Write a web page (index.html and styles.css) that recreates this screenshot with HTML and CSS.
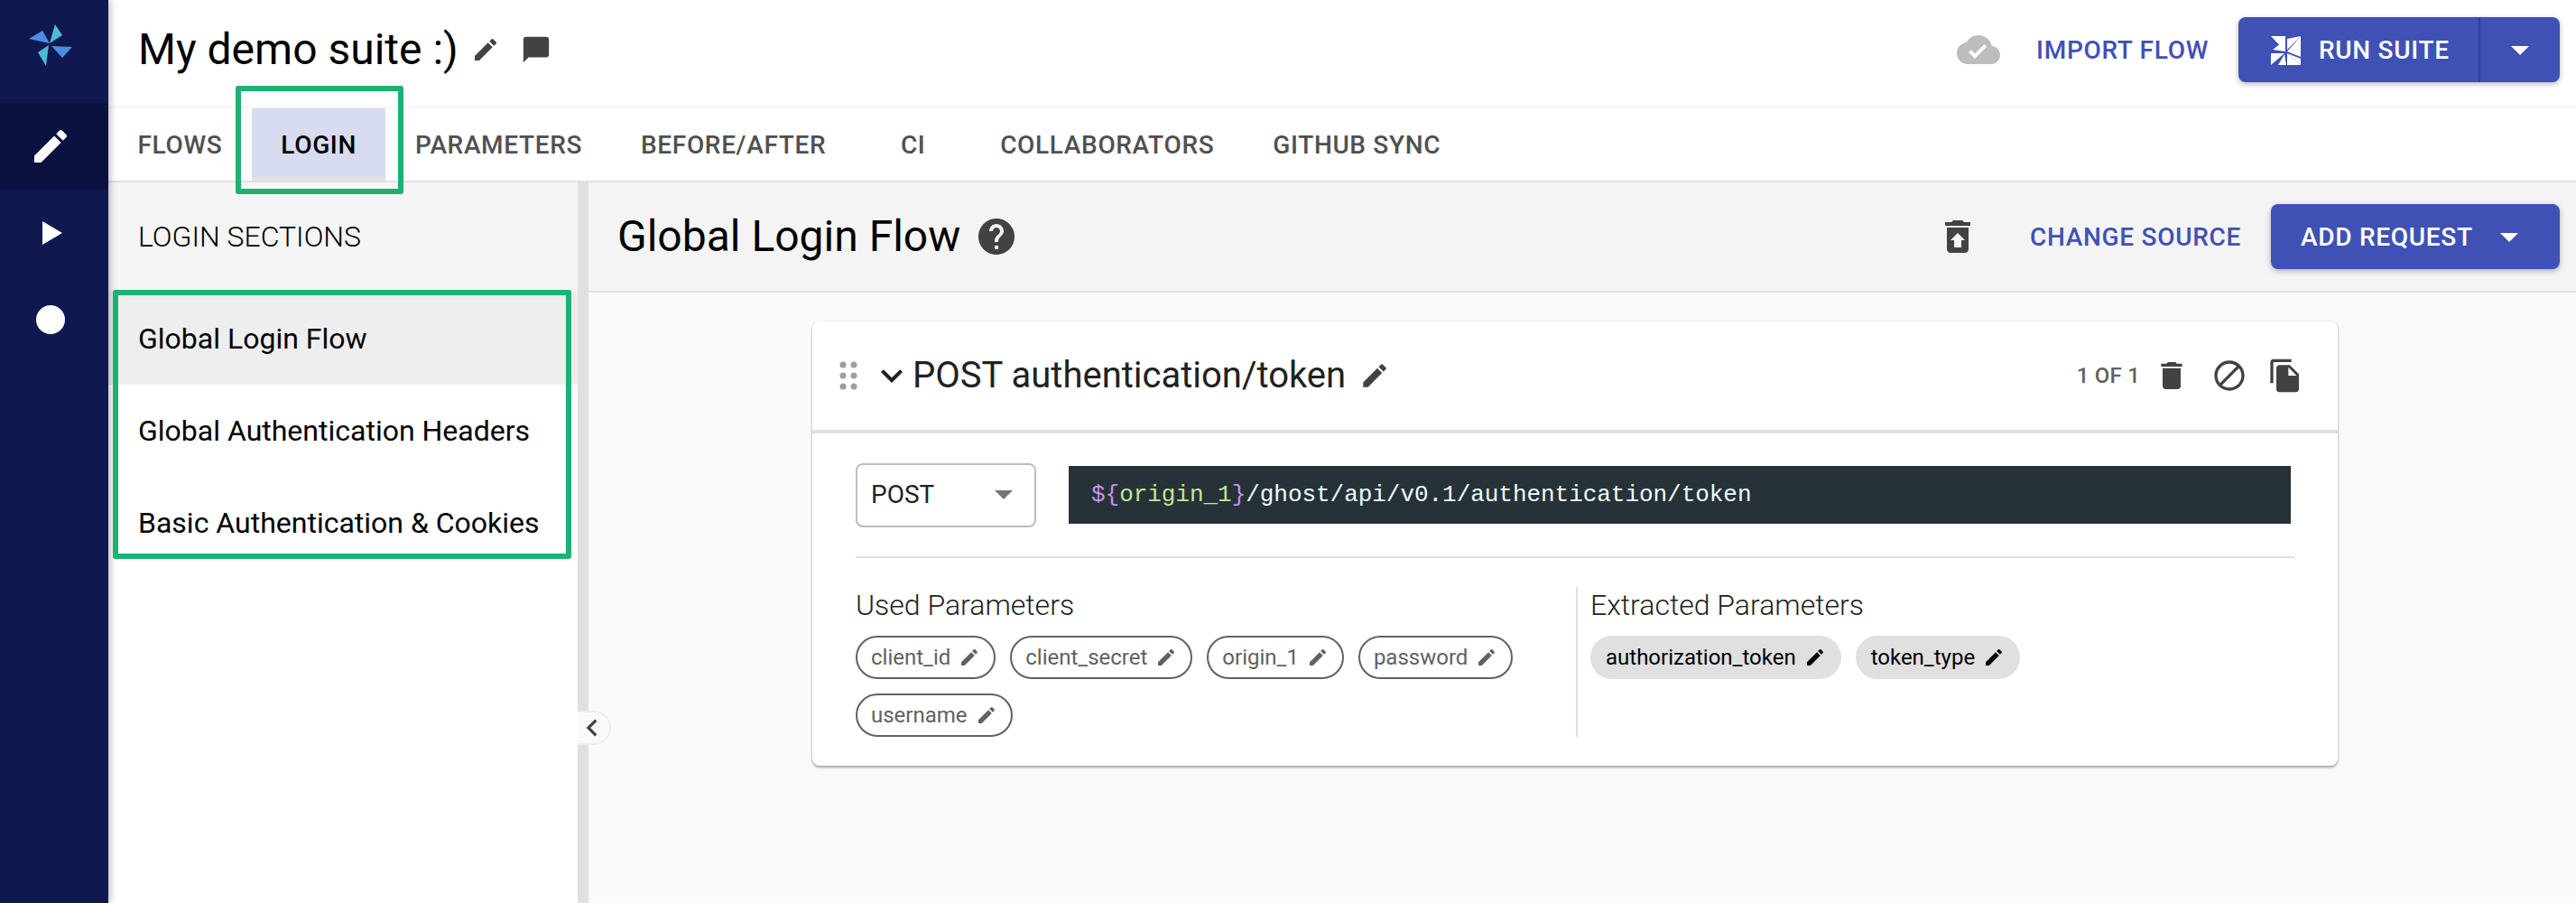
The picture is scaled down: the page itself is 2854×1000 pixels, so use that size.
FILE: index.html
```html
<!DOCTYPE html>
<html lang="en">
<head>
<meta charset="utf-8">
<title>My demo suite :)</title>
<link rel="stylesheet" href="styles.css">
</head>
<body>
<svg class="defs" width="0" height="0" aria-hidden="true">
  <defs>
    <symbol id="i-edit" viewBox="0 0 24 24"><path d="M3 17.25V21h3.75L17.81 9.94l-3.75-3.75L3 17.25zM20.71 7.04c.39-.39.39-1.02 0-1.41l-2.34-2.34c-.39-.39-1.02-.39-1.41 0l-1.83 1.83 3.75 3.75 1.83-1.83z"/></symbol>
    <symbol id="i-caret" viewBox="0 0 24 24"><path d="M7 10l5 5 5-5z"/></symbol>
  </defs>
</svg>
<div class="app">
  <nav class="rail">
    <div class="rail-logo">
      <svg class="logo" viewBox="0 0 72 72">
        <polygon fill="#4cbcd6" points="41,12 49,24 35,33"/>
        <polygon fill="#4d8ce6" points="12,28 27,19 35,33"/>
        <polygon fill="#4d8ce6" points="37,36 60,37 49,49"/>
        <polygon fill="#4cbcd6" points="34,35 22,43 31,58"/>
      </svg>
    </div>
    <div class="rail-item rail-item-active">
      <svg class="rail-icon" viewBox="0 0 24 24"><use href="#i-edit"/></svg>
    </div>
    <div class="rail-item">
      <svg class="rail-play" viewBox="0 0 22 26"><polygon points="0,0 22,13 0,26"/></svg>
    </div>
    <div class="rail-item">
      <span class="rail-dot"></span>
    </div>
  </nav>

  <div class="content">
    <header class="topbar">
      <h1 class="suite-title">My demo suite :)</h1>
      <svg class="ic ic-title-edit" viewBox="0 0 24 24"><use href="#i-edit"/></svg>
      <svg class="ic ic-comment" viewBox="0 0 24 24"><path d="M20 2H4c-1.100 0-2 .9-2 2v18l4-4h14c1.100 0 2-.9 2-2V4c0-1.100-.9-2-2-2z"/></svg>
      <span class="spacer"></span>
      <svg class="ic-cloud" viewBox="0 0 24 24"><path d="M19.35 10.040C18.670 6.590 15.640 4 12 4 9.110 4 6.600 5.640 5.350 8.040 2.340 8.360 0 10.910 0 14c0 3.310 2.690 6 6 6h13c2.760 0 5-2.240 5-5 0-2.640-2.050-4.780-4.650-4.960zM10 17l-3.500-3.500 1.410-1.410L10 14.170 15.180 9l1.410 1.410L10 17z"/></svg>
      <a class="text-btn import-btn">IMPORT FLOW</a>
      <div class="split-btn">
        <div class="split-main">
          <svg class="run-icon" viewBox="0 0 56 50">
            <polygon points="11,10 27,10 27,27"/>
            <polygon points="27,14 13,25 27,27"/>
            <polygon points="44,10 44,33 29,27"/>
            <polygon points="44,10 29,25 29,13"/>
            <polygon points="29,29 44,42 29,42"/>
            <polygon points="29,29 44,35 44,42"/>
            <polygon points="11,29 26,29 11,42"/>
            <polygon points="26,30 19,42 28,42"/>
          </svg>
          <span>RUN SUITE</span>
        </div>
        <div class="split-caret">
          <svg class="caret" viewBox="0 0 24 24"><use href="#i-caret"/></svg>
        </div>
      </div>
    </header>

    <div class="tabs">
      <span class="tab">FLOWS</span>
      <span class="tab tab-active">LOGIN</span>
      <span class="tab">PARAMETERS</span>
      <span class="tab">BEFORE/AFTER</span>
      <span class="tab">CI</span>
      <span class="tab">COLLABORATORS</span>
      <span class="tab">GITHUB SYNC</span>
    </div>

    <div class="workspace">
      <aside class="sidebar">
        <div class="sidebar-head">LOGIN SECTIONS</div>
        <ul class="section-list">
          <li class="section section-active">Global Login Flow</li>
          <li class="section">Global Authentication Headers</li>
          <li class="section">Basic Authentication &amp; Cookies</li>
        </ul>
      </aside>
      <div class="splitter">
        <span class="collapse">
          <svg class="collapse-icon" viewBox="0 0 24 24"><path d="M15.410 7.410L14 6l-6 6 6 6 1.410-1.410L10.830 12z"/></svg>
        </span>
      </div>
      <main class="main">
        <div class="main-head">
          <h2 class="main-title">Global Login Flow</h2>
          <svg class="ic ic-help" viewBox="0 0 24 24"><path d="M12 2C6.480 2 2 6.480 2 12s4.480 10 10 10 10-4.480 10-10S17.520 2 12 2zm1 17h-2v-2h2v2zm2.070-7.750l-.9.920C13.450 12.900 13 13.500 13 15h-2v-.5c0-1.100.45-2.100 1.170-2.830l1.240-1.260c.37-.36.59-.86.59-1.410 0-1.100-.9-2-2-2s-2 .9-2 2H8c0-2.210 1.790-4 4-4s4 1.790 4 4c0 .88-.36 1.680-.93 2.250z"/></svg>
          <span class="spacer"></span>
          <svg class="ic ic-restore" viewBox="0 0 24 24"><path d="M19 4h-3.500l-1-1h-5l-1 1H5v2h14zM6 7v12c0 1.100.9 2 2 2h8c1.100 0 2-.9 2-2V7H6zm8 7v4h-4v-4H8l4-4 4 4h-2z"/></svg>
          <a class="text-btn change-btn">CHANGE SOURCE</a>
          <div class="add-btn">
            <span>ADD REQUEST</span>
            <svg class="caret" viewBox="0 0 24 24"><use href="#i-caret"/></svg>
          </div>
        </div>

        <div class="canvas">
          <article class="card">
            <div class="card-head">
              <svg class="ic-drag" viewBox="0 0 20 32">
                <circle cx="4" cy="4" r="3.500"/><circle cx="16" cy="4" r="3.500"/>
                <circle cx="4" cy="16" r="3.500"/><circle cx="16" cy="16" r="3.500"/>
                <circle cx="4" cy="28" r="3.500"/><circle cx="16" cy="28" r="3.500"/>
              </svg>
              <svg class="ic-chevron" viewBox="0 0 24 24"><path d="M16.590 8.590L12 13.170 7.410 8.590 6 10l6 6 6-6z"/></svg>
              <h3 class="card-title">POST authentication/token</h3>
              <svg class="ic ic-card-edit" viewBox="0 0 24 24"><use href="#i-edit"/></svg>
              <span class="spacer"></span>
              <span class="counter">1 OF 1</span>
              <svg class="ic ic-action" viewBox="0 0 24 24"><path d="M6 19c0 1.100.9 2 2 2h8c1.100 0 2-.9 2-2V7H6v12zM19 4h-3.500l-1-1h-5l-1 1H5v2h14V4z"/></svg>
              <svg class="ic ic-action" viewBox="0 0 24 24"><path d="M12 2C6.480 2 2 6.480 2 12s4.480 10 10 10 10-4.480 10-10S17.520 2 12 2zM4 12c0-4.420 3.580-8 8-8 1.850 0 3.550.63 4.900 1.690L5.690 16.900C4.630 15.550 4 13.850 4 12zm8 8c-1.850 0-3.550-.63-4.900-1.690L18.310 7.100C19.370 8.450 20 10.150 20 12c0 4.420-3.580 8-8 8z"/></svg>
              <svg class="ic ic-action ic-action-last" viewBox="0 0 24 24"><path d="M16 1H4c-1.100 0-2 .9-2 2v14h2V3h12V1zm-1 4l6 6v10c0 1.100-.9 2-2 2H7.990C6.890 23 6 22.100 6 21l.01-14c0-1.100.89-2 1.990-2h7zm-1 7h5.500L14 6.500V12z"/></svg>
            </div>
            <div class="card-body">
              <div class="request-row">
                <div class="method">
                  <span>POST</span>
                  <svg class="method-caret" viewBox="0 0 24 24"><use href="#i-caret"/></svg>
                </div>
                <code class="url"><span class="tok-p">${</span><span class="tok-g">origin_1</span><span class="tok-p">}</span>/ghost/api/v0.1/authentication/token</code>
              </div>
              <div class="params">
                <section class="param-col param-used">
                  <h4 class="param-title">Used Parameters</h4>
                  <div class="chips">
                    <span class="chip">client_id<svg class="chip-edit" viewBox="0 0 24 24"><use href="#i-edit"/></svg></span>
                    <span class="chip">client_secret<svg class="chip-edit" viewBox="0 0 24 24"><use href="#i-edit"/></svg></span>
                    <span class="chip">origin_1<svg class="chip-edit" viewBox="0 0 24 24"><use href="#i-edit"/></svg></span>
                    <span class="chip">password<svg class="chip-edit" viewBox="0 0 24 24"><use href="#i-edit"/></svg></span>
                    <span class="chip">username<svg class="chip-edit" viewBox="0 0 24 24"><use href="#i-edit"/></svg></span>
                  </div>
                </section>
                <section class="param-col param-extracted">
                  <h4 class="param-title">Extracted Parameters</h4>
                  <div class="chips">
                    <span class="chip chip-filled">authorization_token<svg class="chip-edit" viewBox="0 0 24 24"><use href="#i-edit"/></svg></span>
                    <span class="chip chip-filled">token_type<svg class="chip-edit" viewBox="0 0 24 24"><use href="#i-edit"/></svg></span>
                  </div>
                </section>
              </div>
            </div>
          </article>
        </div>
      </main>
    </div>
  </div>
</div>
<div class="callout callout-tab"></div>
<div class="callout callout-sections"></div>
</body>
</html>
```

FILE: styles.css
```css
* { box-sizing: border-box; }
html, body { margin: 0; padding: 0; height: 1000px; overflow: hidden; }
body { font-family: Roboto, "Liberation Sans", sans-serif; color: #000; background: #fff; position: relative; }
h1, h2, h3, h4, ul { margin: 0; padding: 0; font-weight: 400; }
li { list-style: none; }
.defs { position: absolute; }
.spacer { flex: 1 1 auto; }
.ic { fill: #424242; flex: none; display: block; }

.app { display: flex; height: 1000px; }

.rail { width: 120px; flex: none; background: #10194f; box-shadow: 2px 0 8px rgba(0,0,0,.28); position: relative; z-index: 2; }
.rail-logo { height: 114px; display: flex; justify-content: center; padding: 15px 8px 0 0; }
.logo { width: 72px; height: 72px; }
.rail-item { height: 96px; display: flex; align-items: center; justify-content: center; padding-right: 8px; }
.rail-item-active { background: #0c1240; }
.rail-icon { width: 48px; height: 48px; fill: #fff; }
.rail-play { width: 22px; height: 28px; fill: #fff; margin-left: 3px; }
.rail-dot { width: 32px; height: 32px; border-radius: 50%; background: #fff; }

.content { flex: 1 1 auto; min-width: 0; display: flex; flex-direction: column; }

.topbar { height: 120px; flex: none; display: flex; align-items: center; padding: 0 18px 8px 33px; border-bottom: 2px solid #f5f5f5; }
.suite-title { font-size: 48px; line-height: 56px; white-space: nowrap; }
.ic-title-edit { width: 32px; height: 32px; margin-left: 14px; }
.ic-comment { width: 34px; height: 34px; margin-left: 23px; }
.ic-cloud { width: 48px; height: 48px; fill: #bdbdbd; flex: none; display: block; }
.text-btn { font-size: 28px; font-weight: 500; letter-spacing: .7px; color: #3f51b5; white-space: nowrap; }
.import-btn { margin-left: 40px; margin-right: 33px; }
.split-btn { width: 356px; height: 72px; display: flex; background: #3f51b5; border-radius: 8px; color: #fff; box-shadow: 0 2px 6px rgba(0,0,0,.3); }
.split-main { width: 268px; display: flex; align-items: center; padding-left: 25px; font-size: 28px; font-weight: 500; letter-spacing: .7px; border-right: 2px solid #303f9f; }
.run-icon { width: 56px; height: 50px; fill: #fff; margin-right: 8px; flex: none; }
.split-caret { flex: 1 1 auto; display: flex; align-items: center; justify-content: center; }
.caret { width: 48px; height: 48px; fill: #fff; flex: none; }

.tabs { height: 82px; flex: none; display: flex; border-bottom: 2px solid #e0e0e0; }
.tab { min-width: 128px; padding: 0 32.500px; height: 80px; display: flex; align-items: center; justify-content: center; font-size: 28px; font-weight: 500; letter-spacing: .65px; color: #505050; white-space: nowrap; }
.tab-active { background: #d7dcf0; color: #000; box-shadow: inset 0 -4px 0 #e0e0e0; }

.workspace { flex: 1 1 auto; min-height: 0; display: flex; }
.sidebar { width: 520px; flex: none; background: #fff; }
.sidebar-head { height: 122px; background: #f5f5f5; display: flex; align-items: center; padding-left: 33px; font-size: 32px; font-weight: 300; white-space: nowrap; border-bottom: 2px solid #eeeeee; }
.section { height: 102px; display: flex; align-items: center; padding-left: 33px; font-size: 32px; white-space: nowrap; }
.section-active { background: #eeeeee; }

.splitter { width: 12px; flex: none; background: #e0e0e0; position: relative; }
.collapse { position: absolute; left: 0; top: 585px; width: 37px; height: 38px; background: #fafafa; border: 2px solid #eeeeee; border-left: 0; border-radius: 0 20px 20px 0; display: flex; align-items: center; z-index: 1; }
.collapse-icon { width: 38px; height: 38px; fill: #424242; flex: none; margin-left: -3px; }

.main { flex: 1 1 auto; min-width: 0; background: #fafafa; display: flex; flex-direction: column; }
.main-head { height: 122px; flex: none; background: #f4f4f4; border-bottom: 2px solid #e0e0e0; display: flex; align-items: center; padding: 0 18px 0 32px; }
.main-title { font-size: 48px; line-height: 56px; white-space: nowrap; }
.ic-help { width: 48px; height: 48px; margin-left: 16px; }
.ic-restore { width: 48px; height: 48px; }
.change-btn { margin-left: 56px; margin-right: 33px; }
.add-btn { width: 320px; height: 72px; display: flex; align-items: center; padding-left: 33px; gap: 16px; background: #3f51b5; color: #fff; border-radius: 8px; font-size: 28px; font-weight: 500; letter-spacing: .7px; box-shadow: 0 2px 6px rgba(0,0,0,.3); white-space: nowrap; }

.canvas { flex: 1 1 auto; padding: 32px 16px 0 0; display: flex; justify-content: center; align-items: flex-start; }
.card { width: 1690px; background: #fff; border-radius: 8px; box-shadow: 0 2px 3px rgba(0,0,0,.35), 0 0 3px rgba(0,0,0,.08); }
.card-head { height: 124px; border-bottom: 4px solid #e0e0e0; display: flex; align-items: center; padding: 0 38px 0 30px; }
.ic-drag { width: 20px; height: 32px; fill: #9e9e9e; flex: none; }
.ic-chevron { width: 48px; height: 48px; flex: none; fill: #212121; margin-left: 14px; margin-right: -1px; }
.card-title { font-size: 40px; line-height: 48px; white-space: nowrap; color: #212121; }
.ic-card-edit { width: 34px; height: 34px; margin-left: 15px; }
.counter { font-size: 24px; font-weight: 500; color: #616161; letter-spacing: .2px; white-space: nowrap; margin-right: 15px; }
.ic-action { width: 40px; height: 40px; margin-left: 24px; }
.counter + .ic-action { margin-left: 0; }
.ic-action-last { margin-left: 22px; }

.card-body { padding: 32px 48px 32px; }
.request-row { display: flex; align-items: center; height: 72px; }
.method { width: 200px; height: 71px; border: 2px solid #bdbdbd; border-radius: 8px; display: flex; align-items: center; padding: 0 10px 2px 15px; font-size: 28px; color: #212121; justify-content: space-between; }
.method-caret { width: 48px; height: 48px; fill: #757575; flex: none; }
.url { margin-left: 36px; width: 1354px; height: 64px; background: #263238; display: flex; align-items: center; padding-left: 25px; font-family: "Liberation Mono", monospace; font-size: 26px; letter-spacing: -.04px; color: #eeffff; white-space: pre; }
.tok-p { color: #c792ea; }
.tok-g { color: #c3e88d; }

.params { display: flex; border-top: 2px solid #e0e0e0; margin-top: 32px; padding-top: 32px; width: 1594px; }
.param-col { min-width: 0; }
.param-used { width: 798px; flex: none; }
.param-extracted { flex: 1 1 auto; border-left: 2px solid #e0e0e0; padding-left: 14px; min-height: 166px; }
.param-title { font-size: 32px; font-weight: 300; line-height: 40px; color: #212121; }
.chips { display: flex; flex-wrap: wrap; gap: 16px; margin-top: 14px; }
.chip { height: 48px; border: 2px solid #616161; border-radius: 24px; display: flex; align-items: center; padding: 0 15px 0 15px; font-size: 24px; color: #616161; white-space: nowrap; fill: #616161; }
.chip-edit { width: 24px; height: 24px; margin-left: 9px; flex: none; }
.chip-filled { background: #e0e0e0; border-color: #e0e0e0; color: #000; fill: #000; }

.callout { position: absolute; border-style: solid; border-color: #1bb273; border-radius: 3px; pointer-events: none; z-index: 5; }
.callout-tab { left: 261px; top: 95px; width: 186px; height: 120px; border-width: 6px; }
.callout-sections { left: 125px; top: 321px; width: 508px; height: 298px; border-width: 6px; }
```
